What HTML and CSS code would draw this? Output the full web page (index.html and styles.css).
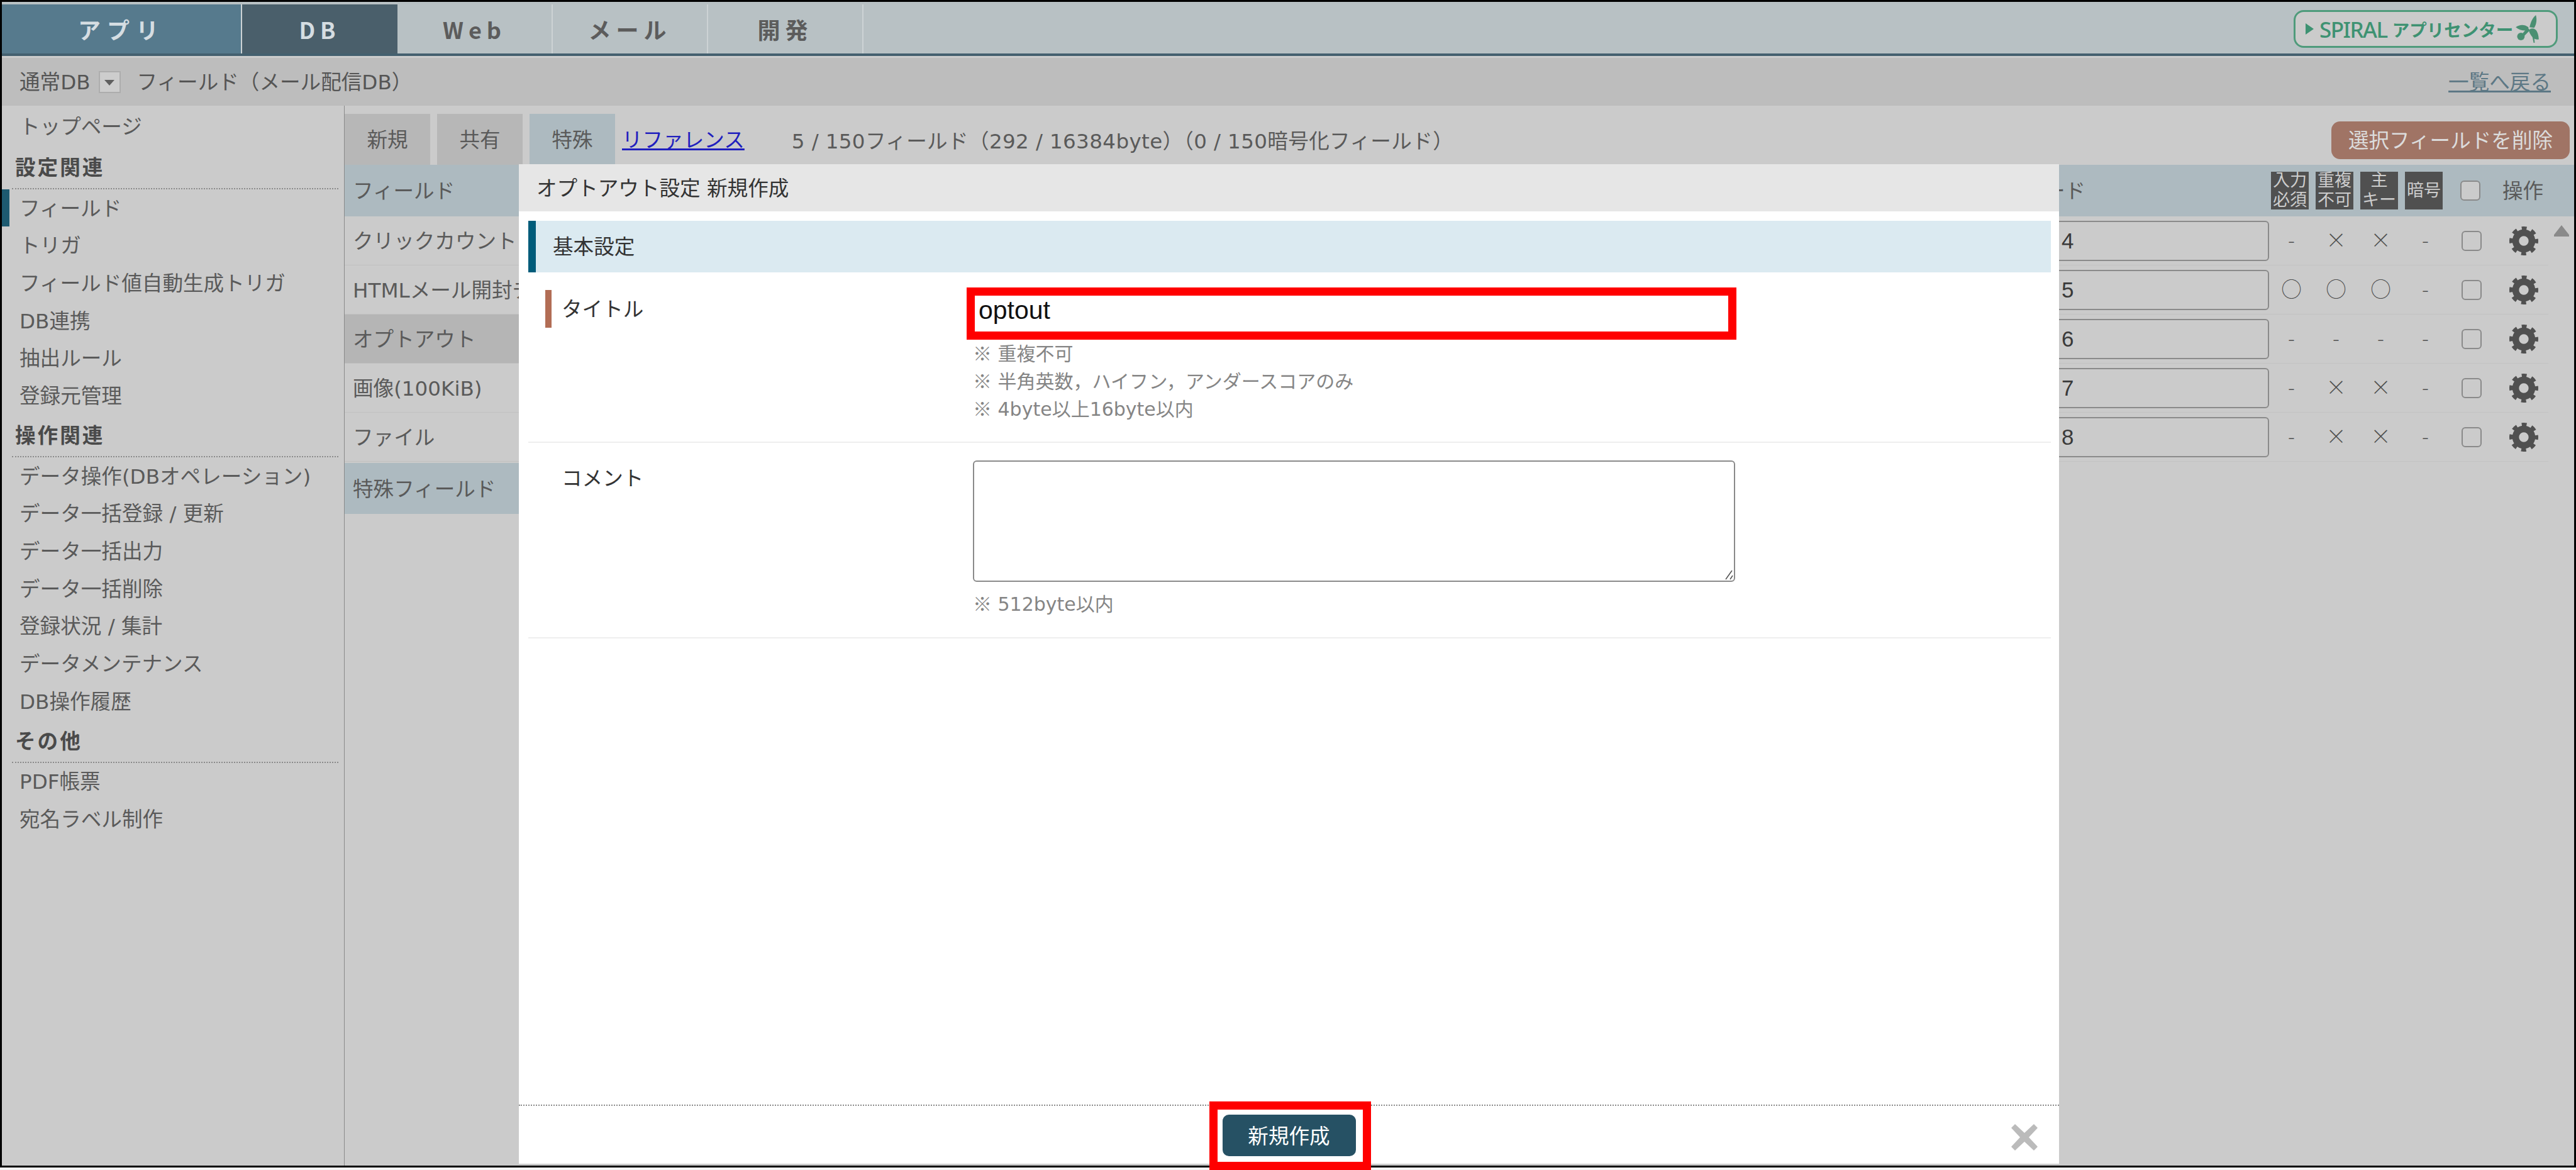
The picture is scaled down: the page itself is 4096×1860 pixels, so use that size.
FILE: index.html
```html
<!DOCTYPE html>
<html lang="ja">
<head>
<meta charset="utf-8">
<title>フィールド（メール配信DB）</title>
<link rel="stylesheet" href="styles.css">
</head>
<body>
<svg class="defs" width="0" height="0" aria-hidden="true">
  <symbol id="gear" viewBox="0 0 48 48">
    <circle cx="24" cy="24" r="13.5" fill="none" stroke="#505050" stroke-width="11"/>
    <circle cx="24" cy="24" r="20.5" fill="none" stroke="#505050" stroke-width="7" stroke-dasharray="8 8.1" stroke-dashoffset="4"/>
  </symbol>
</svg>
<div class="page">
  <div class="frame">
    <header class="topbar">
      <nav class="apptabs">
        <a class="apptab apptab-app">アプリ</a>
        <a class="apptab apptab-db">DB</a>
        <a class="apptab">Web</a>
        <a class="apptab">メール</a>
        <a class="apptab">開発</a>
      </nav>
      <a class="logo">
        <span class="logo-arrow"></span>
        <span class="logo-latin">SPIRAL</span>
        <span class="logo-kana">アプリセンター</span>
        <svg class="logo-icon" viewBox="0 0 40 48">
          <g fill="#4a8f72">
            <path d="M24 21C26 11 30 4 35 0c2 8 1 16-3 22z"/>
            <path d="M22 21C14 15 6 17 0 21c6 5 14 7 22 5z"/>
            <circle cx="9" cy="37" r="6.5"/>
            <path d="M25 24c9-3 14 4 15 18-8 2-14-6-17-14z"/>
            <path d="M20 22l5 4-11 11-4-3z"/>
            <path d="M29 38l3 0 1 10-2 0z"/>
          </g>
        </svg>
      </a>
    </header>
    <div class="subbar">
      <span class="subbar-type">通常DB</span>
      <span class="dropdown"></span>
      <span class="subbar-title">フィールド（メール配信DB）</span>
      <a class="backlink">一覧へ戻る</a>
    </div>
    <div class="content">
      <aside class="sidebar">
        <a class="nav-item nav-top">トップページ</a>
        <div class="nav-head">設定関連</div>
        <a class="nav-item nav-active">フィールド</a>
        <a class="nav-item">トリガ</a>
        <a class="nav-item">フィールド値自動生成トリガ</a>
        <a class="nav-item">DB連携</a>
        <a class="nav-item">抽出ルール</a>
        <a class="nav-item">登録元管理</a>
        <div class="nav-head">操作関連</div>
        <a class="nav-item">データ操作(DBオペレーション)</a>
        <a class="nav-item">データ一括登録 / 更新</a>
        <a class="nav-item">データ一括出力</a>
        <a class="nav-item">データ一括削除</a>
        <a class="nav-item">登録状況 / 集計</a>
        <a class="nav-item">データメンテナンス</a>
        <a class="nav-item">DB操作履歴</a>
        <div class="nav-head">その他</div>
        <a class="nav-item">PDF帳票</a>
        <a class="nav-item">宛名ラベル制作</a>
      </aside>
      <main class="main">
        <div class="toolbar">
          <a class="tab">新規</a>
          <a class="tab">共有</a>
          <a class="tab tab-on">特殊</a>
          <a class="reflink">リファレンス</a>
          <span class="count">5 / 150フィールド（292 / 16384byte）（0 / 150暗号化フィールド）</span>
          <button class="delete">選択フィールドを削除</button>
        </div>
        <div class="panels">
          <div class="typelist">
            <div class="type type-head">フィールド</div>
            <div class="type">クリックカウント</div>
            <div class="type">HTMLメール開封チ</div>
            <div class="type type-sel">オプトアウト</div>
            <div class="type">画像(100KiB)</div>
            <div class="type">ファイル</div>
            <div class="type type-special">特殊フィールド</div>
          </div>
          <div class="fields">
            <div class="row row-head">
              <span class="head-label">ード</span>
              <span class="badge">入力<br>必須</span>
              <span class="badge">重複<br>不可</span>
              <span class="badge">主<br>キー</span>
              <span class="badge">暗号</span>
              <input class="check check-head" type="checkbox">
              <span class="head-op">操作</span>
            </div>
            <div class="rows-wrap">
              <div class="rows">
                <div class="row">
                  <input class="name" value="4">
                  <span class="mark">-</span><span class="mark">×</span><span class="mark">×</span><span class="mark">-</span>
                  <input class="check" type="checkbox">
                  <svg class="gear"><use href="#gear"/></svg>
                </div>
                <div class="row">
                  <input class="name" value="5">
                  <span class="mark">○</span><span class="mark">○</span><span class="mark">○</span><span class="mark">-</span>
                  <input class="check" type="checkbox">
                  <svg class="gear"><use href="#gear"/></svg>
                </div>
                <div class="row">
                  <input class="name" value="6">
                  <span class="mark">-</span><span class="mark">-</span><span class="mark">-</span><span class="mark">-</span>
                  <input class="check" type="checkbox">
                  <svg class="gear"><use href="#gear"/></svg>
                </div>
                <div class="row">
                  <input class="name" value="7">
                  <span class="mark">-</span><span class="mark">×</span><span class="mark">×</span><span class="mark">-</span>
                  <input class="check" type="checkbox">
                  <svg class="gear"><use href="#gear"/></svg>
                </div>
                <div class="row">
                  <input class="name" value="8">
                  <span class="mark">-</span><span class="mark">×</span><span class="mark">×</span><span class="mark">-</span>
                  <input class="check" type="checkbox">
                  <svg class="gear"><use href="#gear"/></svg>
                </div>
              </div>
              <div class="scrollbar"><span class="scroll-up"></span></div>
            </div>
          </div>
        </div>
      </main>
    </div>
  </div>

  <section class="modal">
    <div class="modal-title">オプトアウト設定 新規作成</div>
    <div class="modal-body">
      <div class="section-bar">基本設定</div>
      <div class="form-row">
        <div class="form-label form-label-req">タイトル</div>
        <div class="form-field">
          <div class="title-input">
            <input class="text-input" value="optout">
            <span class="redbox redbox-input"></span>
          </div>
          <div class="notes">
            <div class="note"><span class="kome">※</span> 重複不可</div>
            <div class="note"><span class="kome">※</span> 半角英数，ハイフン，アンダースコアのみ</div>
            <div class="note"><span class="kome">※</span> 4byte以上16byte以内</div>
          </div>
        </div>
      </div>
      <div class="form-row form-row-comment">
        <div class="form-label">コメント</div>
        <div class="form-field">
          <div class="area-wrap">
            <textarea class="text-area"></textarea>
            <svg class="grip" viewBox="0 0 18 18"><path d="M16 3L6 17M17 11L13 17" fill="none" stroke="#555" stroke-width="1.6"/></svg>
          </div>
          <div class="notes notes-comment">
            <div class="note"><span class="kome">※</span> 512byte以内</div>
          </div>
        </div>
      </div>
    </div>
    <footer class="modal-footer">
      <button class="submit">新規作成<span class="redbox redbox-submit"></span></button>
      <svg class="close" viewBox="0 0 42 42"><path d="M6 0L21 14 36 0 42 6 28 21 42 36 36 42 21 28 6 42 0 36 14 21 0 6z" fill="#bbbbbb"/></svg>
    </footer>
  </section>
</div>
</body>
</html>
```
FILE: styles.css
```css
* { box-sizing: border-box; }
html, body { margin: 0; padding: 0; width: 4096px; height: 1860px; overflow: hidden; background: #f4f4f4; }
body { font-family: "DejaVu Sans", "Noto Sans CJK JP", sans-serif; font-size: 32.6px; font-weight: 400; color: #555; }
.defs { position: absolute; }
.page { position: relative; width: 4096px; height: 1860px; }
.frame { width: 4096px; height: 1856px; border: 3px solid #000; background: #cbcbcb; display: flex; flex-direction: column; overflow: hidden; }

/* top bar */
.topbar { flex: none; height: 86px; padding-top: 4px; background: #b8c1c4; border-bottom: 4px solid #44606f; display: flex; justify-content: space-between; position: relative; }
.apptabs { display: flex; }
.apptab { width: 247px; height: 78px; display: flex; align-items: center; justify-content: center; font-family: "Noto Sans CJK JP", sans-serif; font-size: 36px; font-weight: 700; letter-spacing: 8px; color: #5c5c5c; border-right: 2px solid #cdd3d5; }
.apptab-app { width: 382px; background: #567a8d; color: #d5dde2; letter-spacing: 10px; }
.apptab-db { background: #4a5f6b; color: #d5dde2; border-right: 0; }
.logo { display: flex; align-items: center; width: 420px; height: 60px; margin: 9px 26px 0 0; padding-left: 16px; border: 3px solid #4f9b7b; border-radius: 16px; background: #cbcbcb; color: #3e9272; white-space: nowrap; font-family: "Noto Sans CJK JP", sans-serif; }
.logo-arrow { width: 0; height: 0; border-left: 13px solid #3e9272; border-top: 9px solid transparent; border-bottom: 9px solid transparent; margin-right: 9px; }
.logo-latin { font-size: 35px; font-weight: 500; letter-spacing: -1.5px; margin-right: 8px; font-family: "Noto Sans", sans-serif; }
.logo-kana { font-size: 27.5px; font-weight: 700; }
.logo-icon { width: 37px; height: 44px; margin-left: 4px; flex: none; }

/* sub bar */
.subbar { flex: none; height: 79px; background: #bdbdbd; border-top: 3px solid #cccccc; display: flex; align-items: center; padding: 0 37px 5px 28px; }
.dropdown { width: 35px; height: 35px; margin: 5px 26px 0 13px; background: #cdcdcd; border: 2px solid #adadad; display: flex; align-items: center; justify-content: center; }
.dropdown::before { content: ""; border-top: 9px solid #5f5f5f; border-left: 8px solid transparent; border-right: 8px solid transparent; margin-top: 3px; }
.backlink { margin-left: auto; color: #5d7885; text-decoration: underline; }

/* layout */
.content { flex: 1; min-height: 0; display: flex; }
.sidebar { flex: none; width: 545px; padding-top: 3px; border-right: 1px solid #8a8a8a; }
.nav-item { display: flex; align-items: center; height: 59.7px; padding: 0 0 5px 28px; color: #5a5a5a; white-space: nowrap; }
.nav-top { margin-bottom: 2px; }
.nav-active { box-shadow: inset 12px 0 0 #1d5a70; }
.nav-head { height: 68px; margin: 0 9px 0 16px; padding: 0 0 5px 5px; display: flex; align-items: center; font-weight: 700; letter-spacing: 3px; color: #4a4a4a; border-bottom: 2px dotted #8a8a8a; }

.main { flex: 1; min-width: 0; display: flex; flex-direction: column; }
.toolbar { flex: none; height: 94px; padding: 13px 7px 0 0; display: flex; align-items: center; }
.tab { width: 136px; height: 81px; margin-right: 11px; padding-bottom: 5px; background: #b7b7b7; display: flex; align-items: center; justify-content: center; color: #5a5a5a; }
.tab-on { background: #adbac0; }
.reflink { color: #1f1fbe; text-decoration: underline; margin: 0 75px 5px 0; }
.count { color: #5a5a5a; white-space: nowrap; letter-spacing: 0.36px; }
.delete { margin-left: auto; width: 379px; height: 60px; margin-top: 2px; padding: 0 0 5px; border: 0; border-radius: 14px; background: #a07465; color: #dcdcdc; font: inherit; }

.panels { flex: 1; min-height: 0; display: flex; justify-content: space-between; }
.typelist { width: 277px; flex: none; }
.type { height: 78px; padding: 0 0 5px 13px; display: flex; align-items: center; border-bottom: 1px solid #c0c0c0; color: #5a5a5a; white-space: nowrap; }
.type-head { height: 82px; background: #adbac0; border-bottom: 0; }
.type-sel { background: #b5b5b5; }
.type-special { height: 81px; margin-top: 2px; background: #adbac0; border-bottom: 0; }

.fields { flex: none; width: 842px; }
.row { display: grid; grid-template-columns: 357px repeat(4, 71px) 76px 84px; align-items: center; height: 78px; width: 801px; border-bottom: 1px solid #c2c2c2; }
.row-head { width: auto; height: 82px; background: #adbac0; border-bottom: 0; }
.head-label { white-space: nowrap; padding-bottom: 5px; color: #5a5a5a; }
.badge { width: 60px; height: 60px; margin-left: 3px; background: #505050; color: #cdcdcd; font-family: "Liberation Sans", "Noto Sans CJK JP", sans-serif; font-size: 27px; font-weight: 400; line-height: 31px; display: flex; align-items: center; justify-content: center; text-align: center; }
.check { appearance: none; -webkit-appearance: none; width: 32px; height: 32px; margin: 0; justify-self: center; border: 2px solid #8a8a8a; border-radius: 6px; background: transparent; }
.check-head { background: #cbcbcb; margin-left: -4px; }
.head-op { padding: 0 0 5px 11px; color: #5a5a5a; }
.name { width: 348px; height: 64px; margin-left: 9px; padding: 0 0 0 16px; border: 2px solid #8a8a8a; border-radius: 6px; background: transparent; color: #3a3a3a; font-size: 35px; font-family: "Liberation Sans", sans-serif; }
.mark { text-align: center; color: #4f4f4f; line-height: 1; font-family: "Noto Sans CJK JP", sans-serif; font-weight: 300; padding-bottom: 5px; }
.gear { width: 46px; height: 46px; margin-left: 22px; }
.rows-wrap { display: flex; }
.scrollbar { flex: 1; padding: 14px 0 0 9px; }
.scroll-up { display: block; width: 24px; height: 18px; background: #8a8a8a; clip-path: polygon(50% 0, 100% 85%, 100% 100%, 0 100%, 0 85%); }

/* modal */
.modal { position: absolute; left: 825px; top: 261px; width: 2449px; height: 1589px; background: #fff; color: #333; display: flex; flex-direction: column; }
.modal-title { flex: none; height: 75px; padding: 0 0 5px 28px; display: flex; align-items: center; background: #e6e6e6; color: #333; }
.modal-body { flex: 1; min-height: 0; padding: 15px 13px 0 15px; }
.section-bar { height: 82px; padding: 0 0 5px 27px; display: flex; align-items: center; background: #dbeaf1; border-left: 12px solid #005c7a; color: #333; }
.form-row { display: grid; grid-template-columns: 707px 1fr; padding: 28px 0 29px; border-bottom: 2px solid #eeeeee; }
.form-row-comment { padding-bottom: 30px; }
.form-label { height: 60px; padding-left: 53px; display: flex; align-items: flex-start; padding-top: 4px; color: #333; }
.form-row-comment .form-label { padding-top: 2px; }
.form-label-req { position: relative; }
.form-label-req::before { content: ""; position: absolute; left: 27px; top: 0; width: 10px; height: 60px; background: #b26d55; }
.title-input { position: relative; width: 1216px; height: 70px; margin-top: 2px; }
.text-input { display: block; width: 100%; height: 70px; padding: 0 0 10px 9px; border: 0; background: #fff; color: #111; font-size: 41px; font-family: "Liberation Sans", sans-serif; outline: 0; }
.area-wrap { position: relative; width: 1212px; height: 193px; }
.text-area { display: block; width: 100%; height: 100%; margin: 0; padding: 8px; border: 2px solid #8a8a8a; border-radius: 6px; background: #fff; font: inherit; resize: none; }
.grip { position: absolute; right: 3px; bottom: 3px; width: 18px; height: 18px; }
.notes { margin-top: 8px; font-size: 30px; line-height: 44px; color: #858585; white-space: nowrap; }
.note { height: 44px; overflow: visible; }
.notes-comment { margin-top: 14px; }
.kome { font-family: "Noto Sans CJK JP", sans-serif; line-height: 0; }
.redbox { position: absolute; border: 13px solid #f00; pointer-events: none; }
.redbox-input { left: -10px; top: -6px; width: 1224px; height: 83px; }
.redbox-submit { left: -21px; top: -21px; width: 257px; height: 109px; }
.modal-footer { flex: none; height: 94px; border-top: 2px dotted #8a8a8a; position: relative; display: flex; justify-content: center; padding-top: 14px; }
.submit { position: relative; width: 212px; height: 66px; padding: 0 0 4px; border: 0; border-radius: 10px; background: #265164; color: #fff; font: inherit; font-weight: 400; }
.close { position: absolute; right: 34px; top: 29px; width: 42px; height: 42px; }
```
